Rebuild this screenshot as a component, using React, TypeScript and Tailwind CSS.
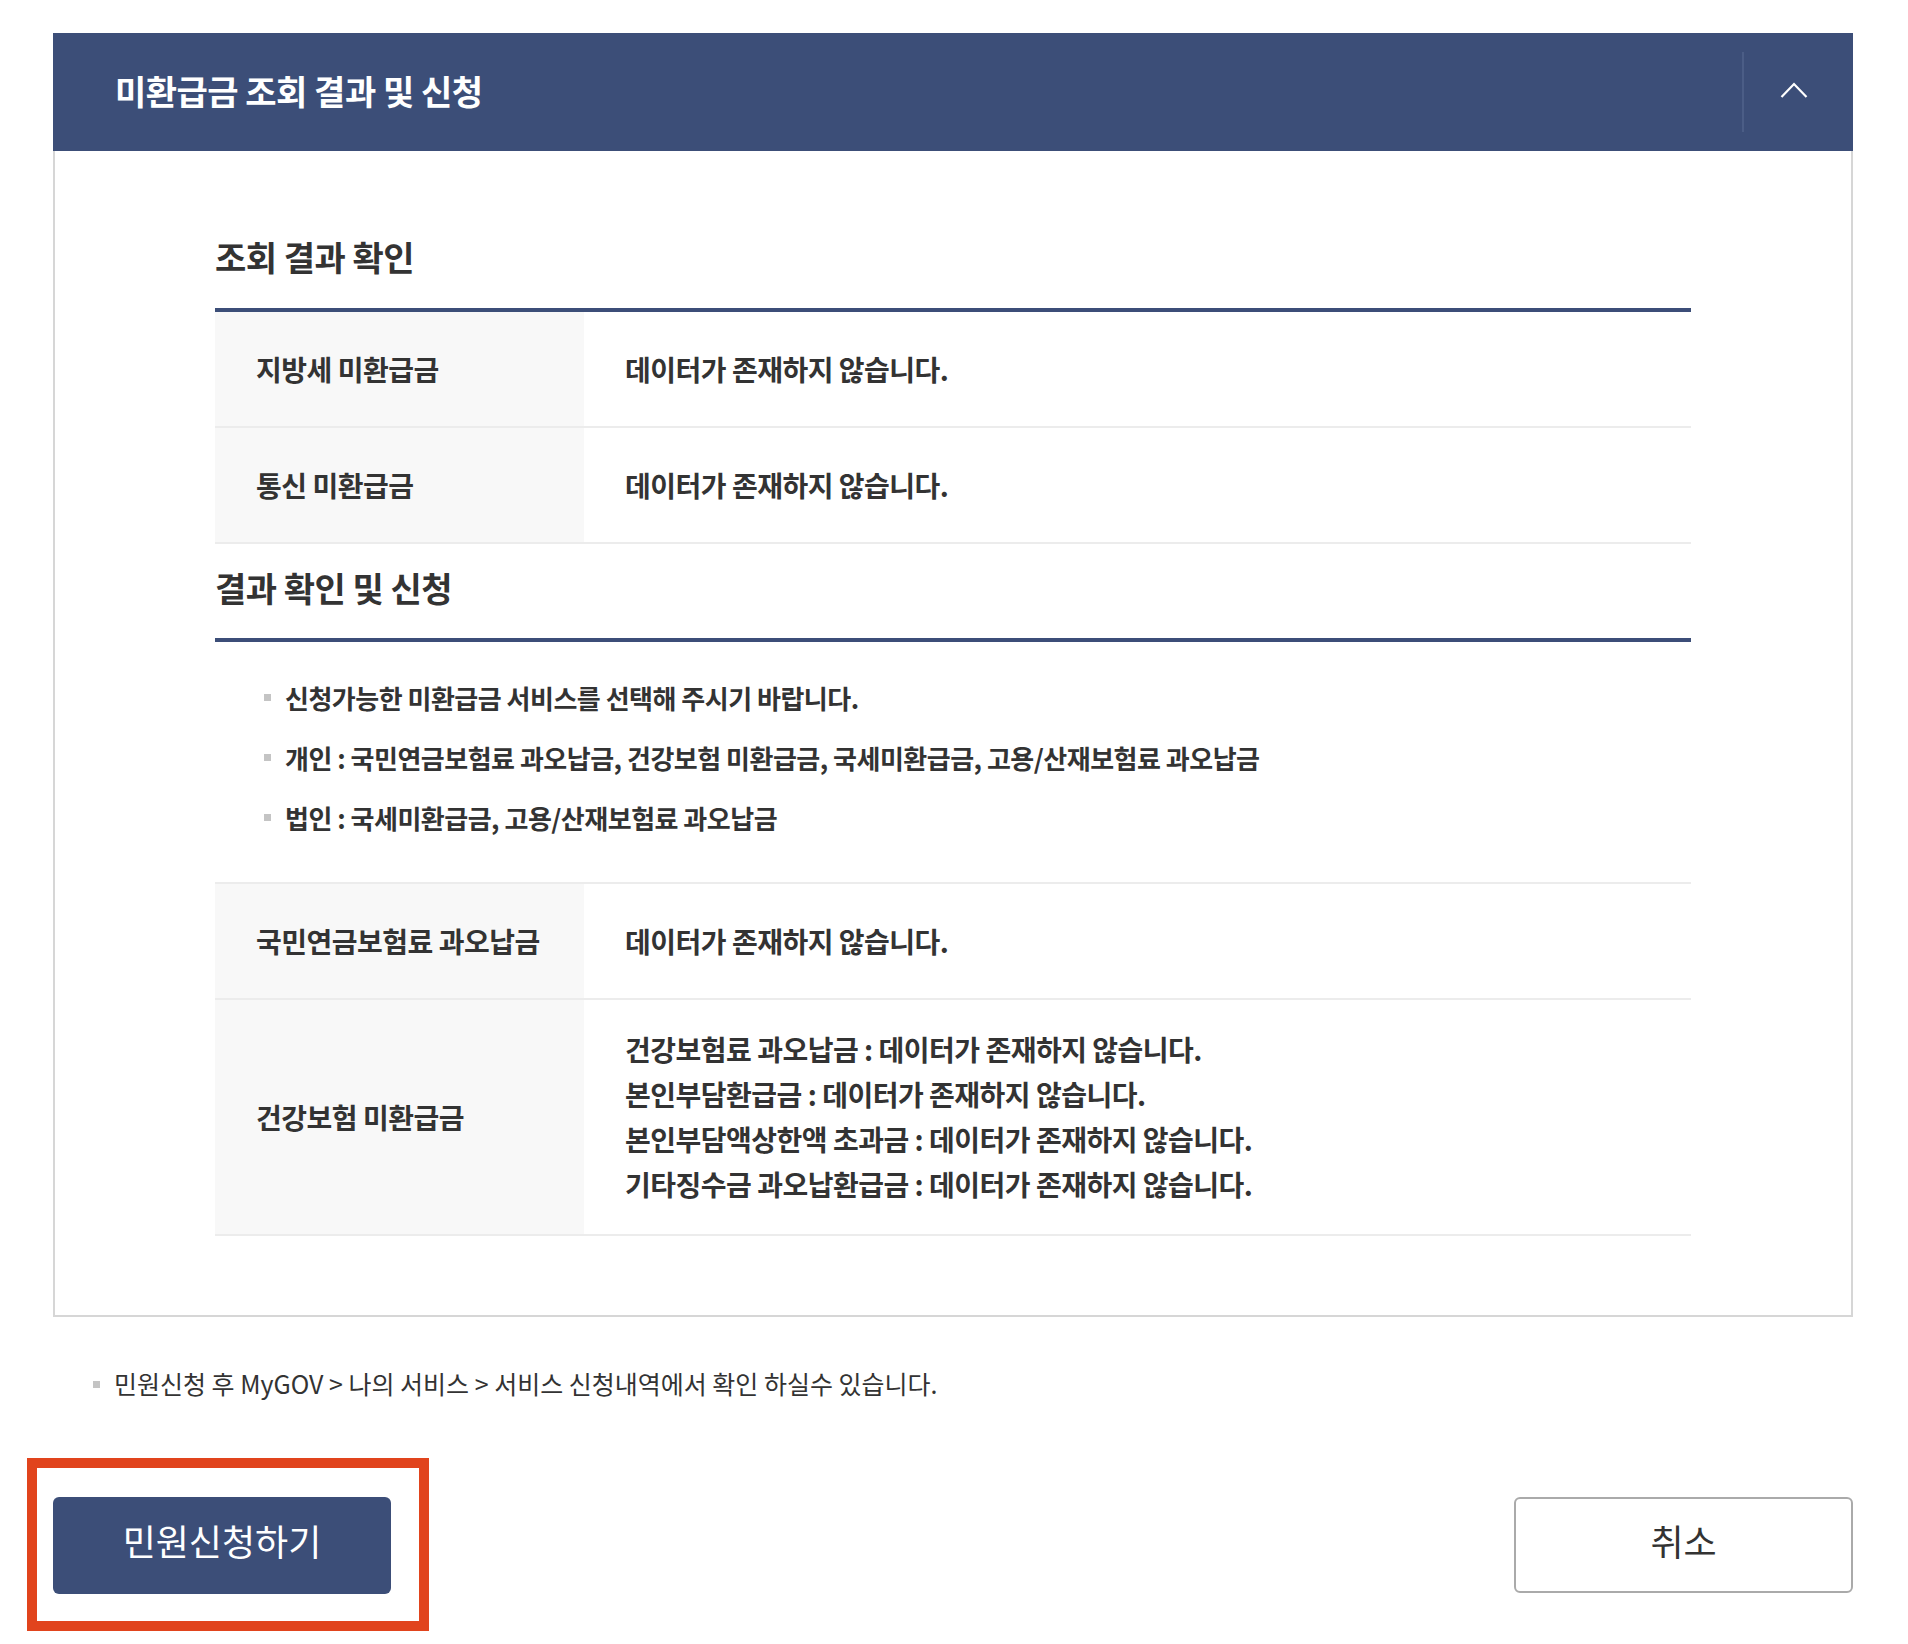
import React from 'react';

// 조회 결과 rows
const resultRows = [
  { label: '지방세 미환급금', value: ['데이터가 존재하지 않습니다.'] },
  { label: '통신 미환급금', value: ['데이터가 존재하지 않습니다.'] },
];

const applyRows = [
  { label: '국민연금보험료 과오납금', value: ['데이터가 존재하지 않습니다.'] },
  {
    label: '건강보험 미환급금',
    value: [
      '건강보험료 과오납금 : 데이터가 존재하지 않습니다.',
      '본인부담환급금 : 데이터가 존재하지 않습니다.',
      '본인부담액상한액 초과금 : 데이터가 존재하지 않습니다.',
      '기타징수금 과오납환급금 : 데이터가 존재하지 않습니다.',
    ],
  },
];

const notices = [
  '신청가능한 미환급금 서비스를 선택해 주시기 바랍니다.',
  '개인 : 국민연금보험료 과오납금, 건강보험 미환급금, 국세미환급금, 고용/산재보험료 과오납금',
  '법인 : 국세미환급금, 고용/산재보험료 과오납금',
];

type Row = { label: string; value: string[] };

const InfoTable = ({ rows, topClass }: { rows: Row[]; topClass: string }) => (
  <div className={topClass}>
    {rows.map((row) => {
      const multi = row.value.length > 1;
      return (
        <div key={row.label} className="flex border-b-2 border-[#ececec]">
          <div className="w-[369px] shrink-0 bg-[#f8f8f8] pl-[41px] flex items-center text-[28px] font-bold tracking-[-0.5px] text-[#333]">
            {row.label}
          </div>
          <div
            className={`flex-1 pl-[41px] flex flex-col justify-center text-[28px] font-bold tracking-[-0.5px] text-[#333] ${
              multi ? 'py-[27px] leading-[45px]' : 'h-[114px]'
            }`}
          >
            {row.value.map((v) => (
              <p key={v}>{v}</p>
            ))}
          </div>
        </div>
      );
    })}
  </div>
);

export default function App() {
  return (
    <div className="relative min-h-[1644px] bg-white font-['Noto_Sans_CJK_KR','Noto_Sans',sans-serif]">
      <div className="pt-[33px] pl-[53px]">
        <section className="w-[1800px]">
          {/* 아코디언 헤더 */}
          <div className="h-[118px] bg-[#3c4e78] flex items-center justify-between">
            <h2 className="pl-[62px] pb-[3px] text-[34px] font-bold text-white tracking-[-0.5px]">미환급금 조회 결과 및 신청</h2>
            <button className="h-[80px] w-[111px] border-l-2 border-[#4b5d86] flex items-center justify-center pr-[10px]">
              <svg width="28" height="16" viewBox="0 0 28 16" fill="none" className="mb-[5px]">
                <polyline points="1.5,15 14,2 26.5,15" stroke="#fff" strokeWidth="2.2" />
              </svg>
            </button>
          </div>

          <div className="border-2 border-t-0 border-[#d6d6d6] px-[160px] pt-[82px] pb-[79px]">
            <h3 className="text-[34px] leading-[48px] font-bold tracking-[-0.5px] text-[#333]">조회 결과 확인</h3>
            <InfoTable rows={resultRows} topClass="mt-[27px] border-t-4 border-[#3c4e78]" />

            <h3 className="mt-[20px] text-[34px] leading-[48px] font-bold tracking-[-0.5px] text-[#333]">결과 확인 및 신청</h3>
            <div className="mt-[26px] border-t-4 border-[#3c4e78]" />
            <ul className="pt-[25px] pb-[35px] pl-[49px]">
              {notices.map((n) => (
                <li key={n} className="flex items-center h-[60px] text-[26px] font-bold tracking-[-0.5px] text-[#333]">
                  <span className="w-[7px] h-[7px] bg-[#c4c4c4] mr-[14px] shrink-0" />
                  {n}
                </li>
              ))}
            </ul>
            <InfoTable rows={applyRows} topClass="border-t-2 border-[#ececec]" />
          </div>
        </section>

        <p className="mt-[49px] pl-[40px] flex items-center h-[36px] text-[25px] tracking-[0px] text-[#333]">
          <span className="w-[7px] h-[7px] bg-[#c4c4c4] mr-[14px] shrink-0" />
          민원신청 후 MyGOV &gt; 나의 서비스 &gt; 서비스 신청내역에서 확인 하실수 있습니다.
        </p>

        <div className="mt-[95px] w-[1800px] flex justify-between items-start">
          <button className="w-[338px] h-[97px] rounded-[6px] bg-[#3c4e78] text-white text-[36px] pb-[11px]">
            민원신청하기
          </button>
          <button className="w-[339px] h-[96px] rounded-[6px] border-2 border-[#aaaaaa] bg-white text-[#333] text-[36px] pb-[11px]">
            취소
          </button>
        </div>
      </div>

      {/* 강조 표시 */}
      <div className="absolute left-[27px] top-[1458px] w-[402px] h-[173px] border-[10px] border-[#e1441d] pointer-events-none" />
    </div>
  );
}
